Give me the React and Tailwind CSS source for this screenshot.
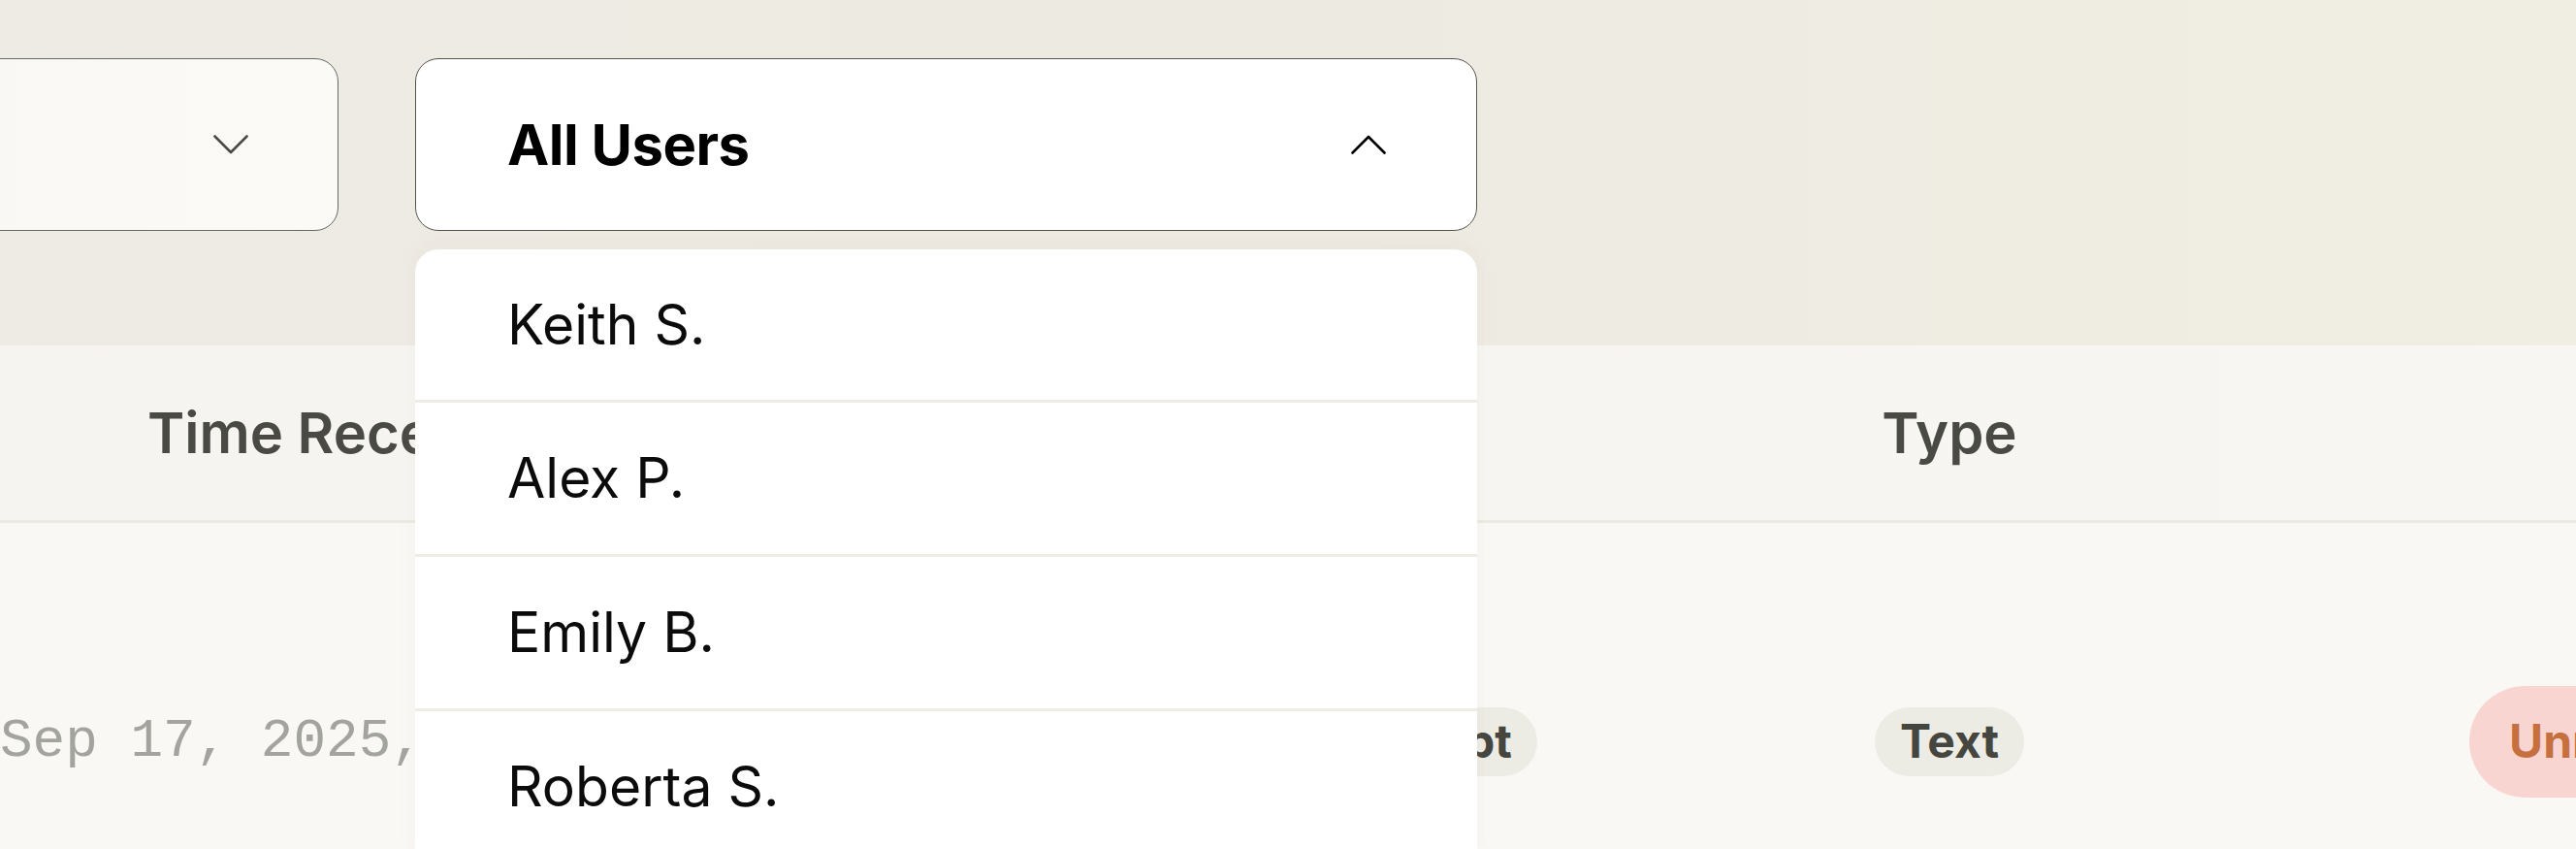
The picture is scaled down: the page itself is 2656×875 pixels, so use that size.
import React from 'react';

const users = ['Keith S.', 'Alex P.', 'Emily B.', 'Roberta S.'];

const Chevron = ({ up = false, className = '' }) => (
    <svg width="36" height="20" viewBox="0 0 36 20" fill="none" className={className}>
        <polyline
            points={up ? '1.5,18.5 18,2 34.5,18.5' : '1.5,1.5 18,18 34.5,1.5'}
            stroke="currentColor"
            strokeWidth="2.6"
            strokeLinecap="round"
            strokeLinejoin="round"
        />
    </svg>
);

const App = () => {
    return (
        <div className="w-[2656px] h-[875px] overflow-hidden bg-[#f9f8f5] font-['Inter','Noto_Sans',sans-serif]">
            {/* Filter bar */}
            <div className="h-[356px] bg-gradient-to-r from-[#eeebe4] via-[#edeae2] to-[#f0ede2] pt-[60px]">
                <div className="flex gap-[79px] ml-[-251px]">
                    <button className="w-[600px] h-[178px] rounded-3xl border border-[#686963] bg-gradient-to-r from-[#f8f7f3] to-[#fbfaf7] flex items-center justify-end pr-[92px] text-[#4a4a44]">
                        <Chevron />
                    </button>

                    <div className="relative w-[1095px]">
                        <button className="w-full h-[178px] rounded-3xl border border-[#55554f] bg-white flex items-center justify-between pl-[94px] pr-[93px] text-black">
                            <span className="text-[58px] font-bold tracking-[-0.5px]">All Users</span>
                            <Chevron up />
                        </button>

                        {/* Dropdown menu */}
                        <div className="absolute left-0 top-[197px] z-10 w-full bg-white rounded-t-3xl flex flex-col shadow-[0_-6px_16px_rgba(214,190,180,0.1)]">
                            {users.map((u, i) => (
                                <div
                                    key={u}
                                    className={`flex items-center pl-[95px] text-[57px] text-[#0b0b0b] ${i > 0 ? 'h-[159px] border-t-[3px] border-[#eeece5]' : 'h-[155px]'}`}
                                >
                                    {u}
                                </div>
                            ))}
                        </div>
                    </div>
                </div>
            </div>

            {/* Table header */}
            <div className="h-[183px] bg-gradient-to-r from-[#f5f4f0] via-[#f6f5f1] to-[#f7f6f2] border-b-[3px] border-[#ebe9e1] grid grid-cols-[1016px_844px_300px_1fr] items-center text-[58px] font-semibold text-[#4a4a44]">
                <div className="pl-[152px] whitespace-nowrap">Time Received</div>
                <div className="text-center pr-[140px]">Source</div>
                <div className="text-center">Type</div>
                <div />
            </div>

            {/* Table row */}
            <div className="h-[450px] grid grid-cols-[1016px_844px_300px_1fr] items-center">
                <div className="whitespace-nowrap font-['Liberation_Mono',monospace] text-[56px] text-[#a4a49e]">
                    Sep 17, 2025, 10:42 AM
                </div>
                <div className="flex justify-center">
                    <span className="h-[71px] px-[26px] rounded-full bg-[#ecebe4] flex items-center text-[48px] font-bold text-[#45463f]">
                        Transcript
                    </span>
                </div>
                <div className="flex justify-center">
                    <span className="h-[71px] px-[26px] rounded-full bg-[#ecebe4] flex items-center text-[48px] font-bold text-[#45463f]">
                        Text
                    </span>
                </div>
                <div className="pl-[386px]">
                    <span className="h-[115px] px-[41px] rounded-full bg-[#f9d5d2] inline-flex items-center text-[48px] font-bold text-[#c7703f]">
                        Unread
                    </span>
                </div>
            </div>
        </div>
    );
};

export default App;
